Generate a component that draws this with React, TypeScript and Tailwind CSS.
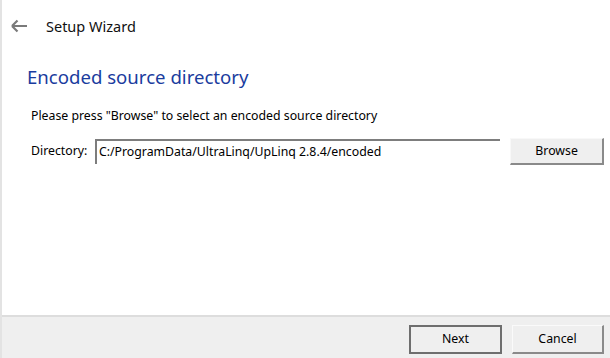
import React from "react";

export default function App() {
  return (
    <div
      className="w-[610px] h-[358px] flex flex-col bg-white border-l-2 border-[#e3e3e3] text-black"
      style={{ fontFamily: '"Noto Sans", "Open Sans", sans-serif' }}
    >
      <div className="h-[54px] flex items-center pl-[8px]">
        <svg width="18" height="14" viewBox="0 0 18 14" className="mt-[-2px]">
          <path d="M2 7 H17 M2 7 L7.5 1.5 M2 7 L7.5 12.5" stroke="#7a7a7a" strokeWidth="2.2" fill="none" />
        </svg>
        <span className="ml-[18px] text-[14.5px] text-[#111]">Setup Wizard</span>
      </div>
      <div className="flex-1 flex flex-col pl-[25px] pr-[6px]">
        <div className="text-[18.6px] text-[#1a3c9e] leading-none mt-[14px]">Encoded source directory</div>
        <div className="text-[12.3px] mt-[23px] ml-[4px] leading-none">
          Please press "Browse" to select an encoded source directory
        </div>
        <div className="flex items-center mt-[16px] ml-[4px] text-[12.3px]">
          <span className="w-[64px]">Directory:</span>
          <div className="w-[406px] h-[25px] border-t-2 border-l-2 border-[#7d7d7d] flex items-center pl-[2px]">
            C:/ProgramData/UltraLinq/UpLinq 2.8.4/encoded
          </div>
          <button className="ml-[10px] w-[94px] h-[27px] bg-[#efefef] border-r-2 border-b-2 border-[#8a8a8a] border-t border-l border-t-[#f8f8f8] border-l-[#f8f8f8]">
            Browse
          </button>
        </div>
      </div>
      <div className="h-[43px] bg-[#efefef] border-t-2 border-[#dddddd] flex items-center justify-end pr-[6px] gap-[10px] text-[12.3px] pt-[4px]">
        <button className="w-[93px] h-[29px] border-2 border-[#6e6e6e] bg-[#efefef]">Next</button>
        <button className="w-[92px] h-[29px] bg-[#efefef] border-r-2 border-b-2 border-[#8a8a8a] border-t border-l border-t-[#fafafa] border-l-[#fafafa]">
          Cancel
        </button>
      </div>
    </div>
  );
}
